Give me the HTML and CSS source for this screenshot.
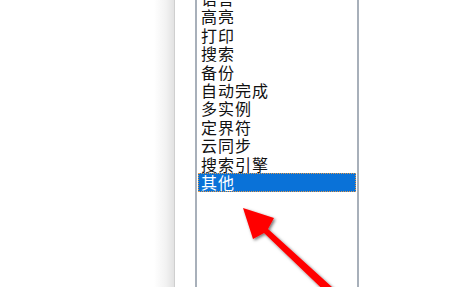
FILE: index.html
```html
<!DOCTYPE html>
<html lang="zh-CN">
<head>
    <meta charset="UTF-8">
    <title>设置 - 其他</title>
    <link rel="stylesheet" href="styles.css">
</head>
<body>

<div class="page">
    <div class="blank"></div>
    <div class="shade"></div>
    <div class="dialog">
        <div class="listbox">
            <ul class="items">
                <li>语言</li>
                <li>高亮</li>
                <li>打印</li>
                <li>搜索</li>
                <li>备份</li>
                <li>自动完成</li>
                <li>多实例</li>
                <li>定界符</li>
                <li>云同步</li>
                <li>搜索引擎</li>
                <li class="selected">其他</li>
            </ul>
        </div>
    </div>
</div>

<!-- 红色箭头指向选中项 -->
<svg class="arrow" width="450" height="287" viewBox="0 0 450 287">
    <defs>
        <filter id="shadow" x="-20%" y="-20%" width="140%" height="140%">
            <feDropShadow dx="1.5" dy="1.5" stdDeviation="1.6" flood-color="#000" flood-opacity="0.55"/>
        </filter>
    </defs>
    <polygon points="243,208 274,218 268,229 343,297 337,303 264,233 253,239" fill="#ff0000" filter="url(#shadow)"/>
</svg>

</body>
</html>
```

FILE: styles.css
```css
html, body {
    margin: 0;
    height: 287px;
    overflow: hidden;
    background: #ffffff;
}
.page {
    display: flex;
    height: 287px;
}
.blank {
    width: 154px;
}
.shade {
    width: 20px;
    background: linear-gradient(to right, #ffffff, #f2f2f2 60%, #e2e2e2);
    border-right: 1px solid #cfcfcf;
}
.dialog {
    flex: 1;
    padding-left: 20px;
    background: #ffffff;
}
.listbox {
    width: 160px;
    height: 100%;
    border-left: 2px solid #a8b0ba;
    border-right: 2px solid #a8b0ba;
    background: #ffffff;
    overflow: hidden;
}
.items {
    list-style: none;
    margin: -11px 0 0 0;
    padding: 0 1px 0 1px;
    font-family: "Noto Sans CJK SC", "DejaVu Sans", sans-serif;
    font-size: 16px;
    letter-spacing: 1px;
    color: #111;
}
.items li {
    height: 18.4px;
    line-height: 18.4px;
    padding-left: 3px;
    white-space: nowrap;
}
.items li.selected {
    height: 19px;
    line-height: 19px;
    background: #0a72d8;
    color: #ffffff;
    outline: 1px dotted #e39a4a;
    outline-offset: -1px;
}
.arrow {
    position: absolute;
    left: 0;
    top: 0;
    pointer-events: none;
}
```
